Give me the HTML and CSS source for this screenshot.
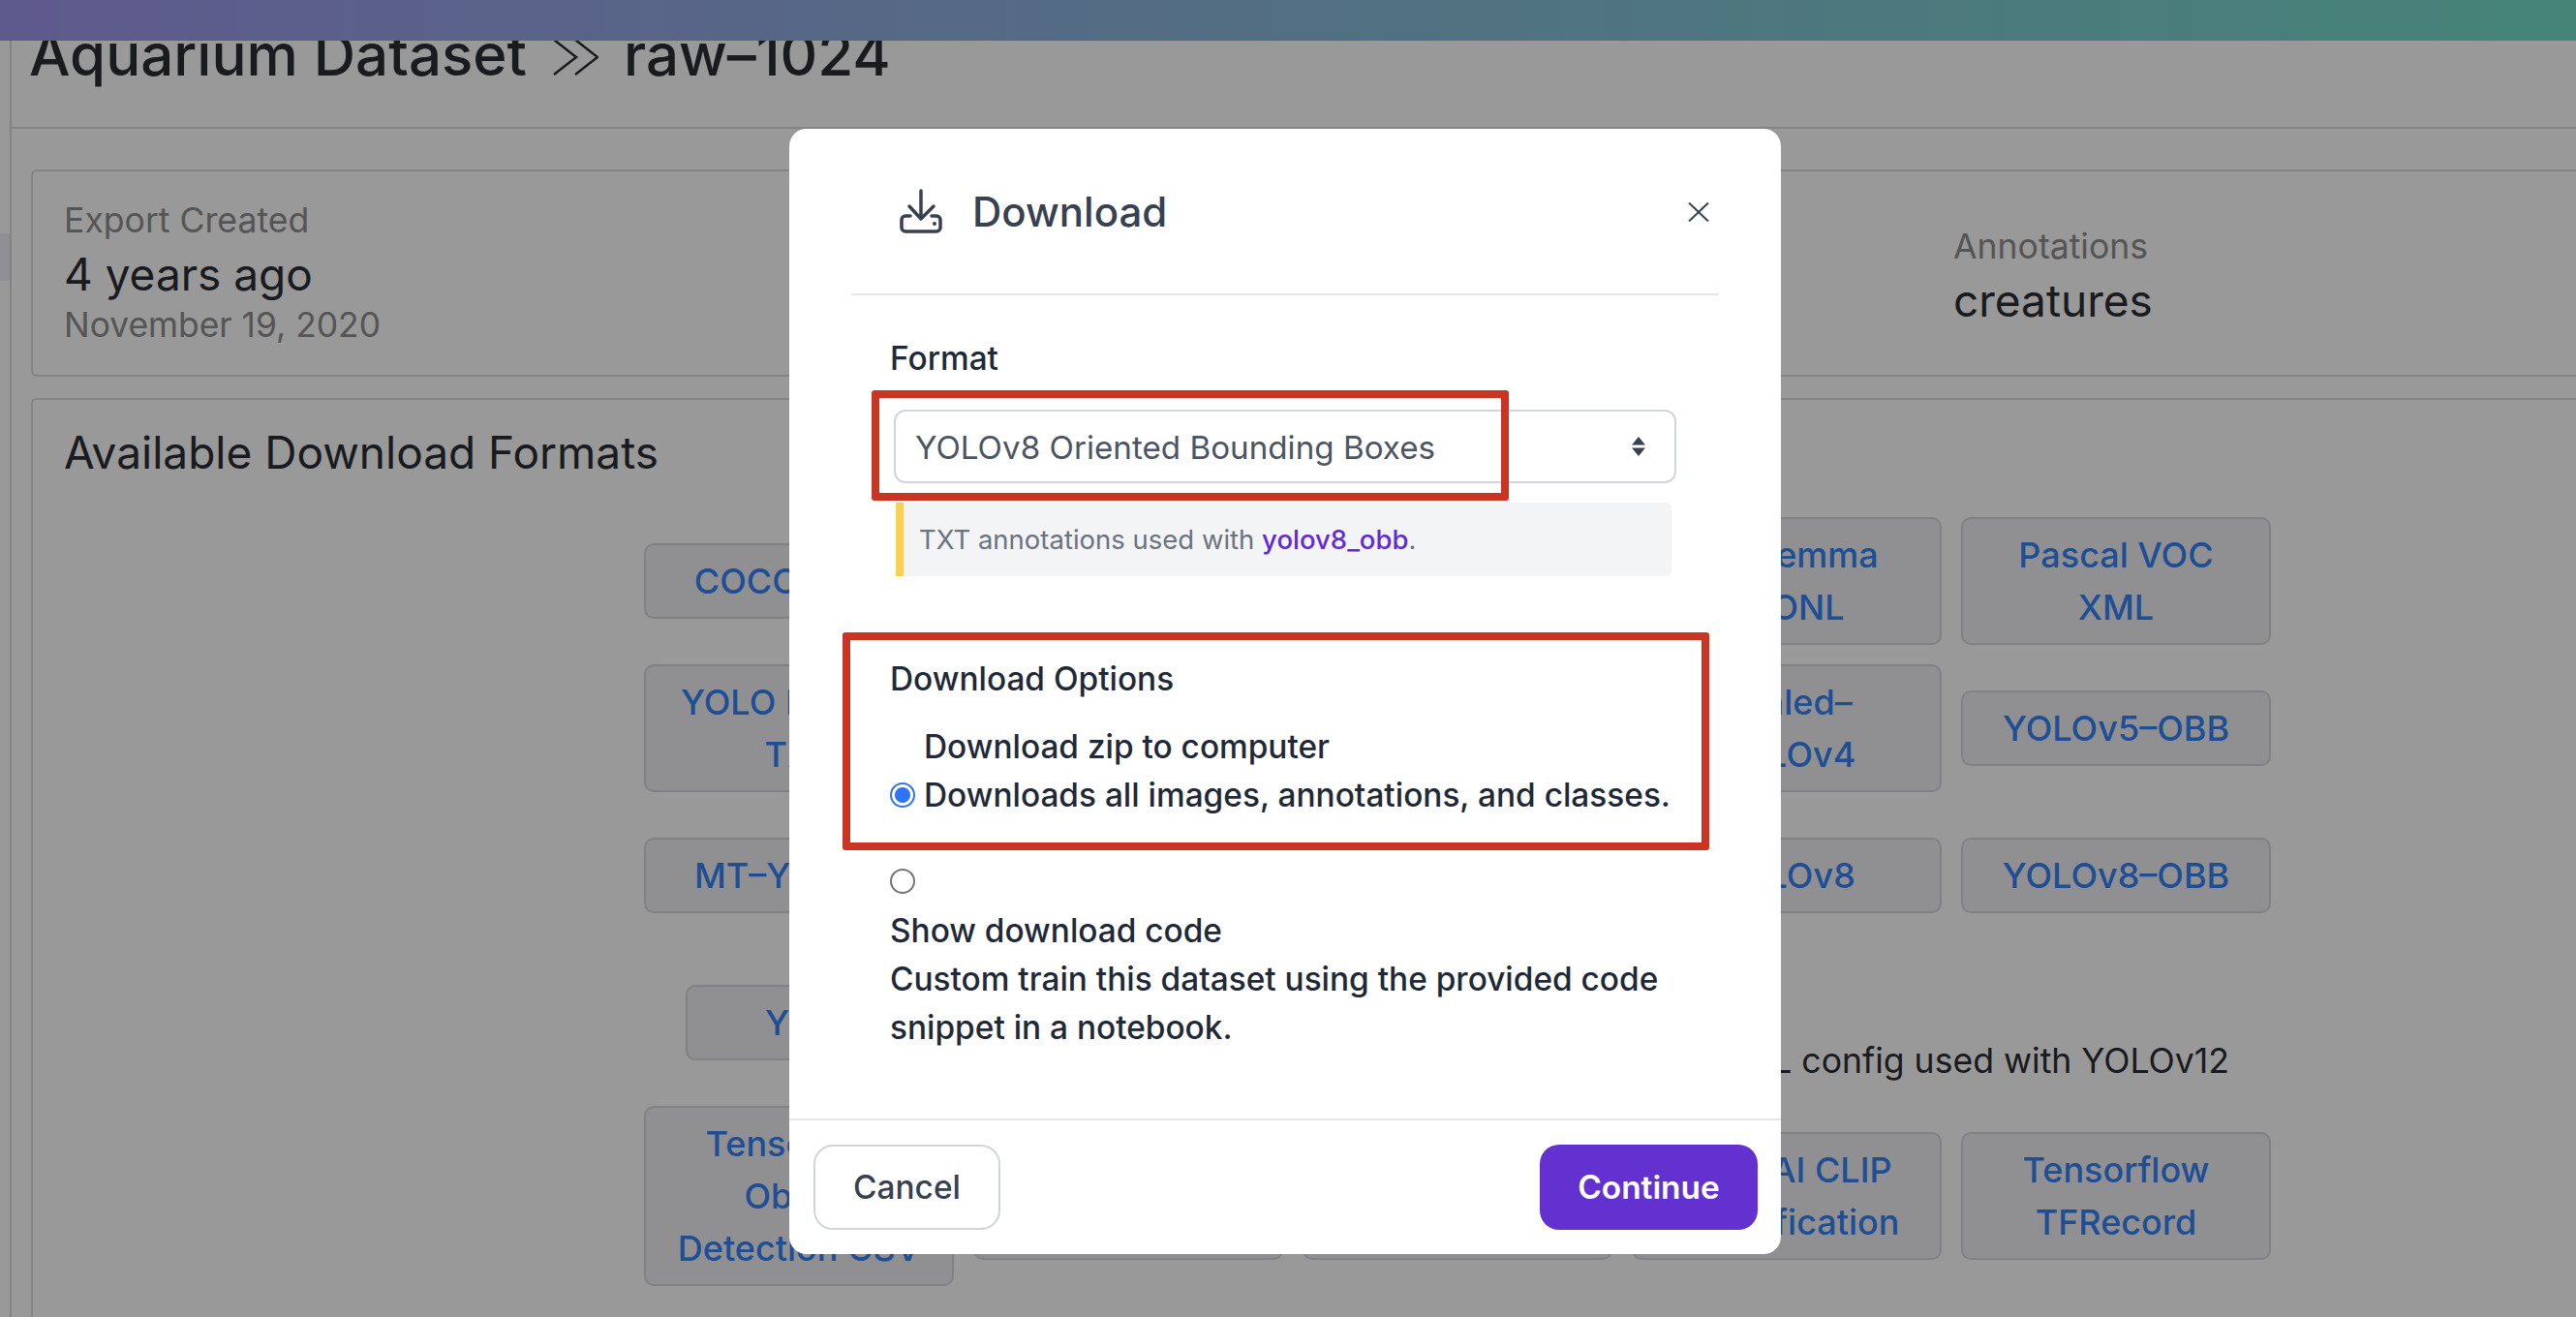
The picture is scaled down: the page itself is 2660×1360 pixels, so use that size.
FILE: index.html
```html
<!DOCTYPE html>
<html lang="en">
<head>
<meta charset="utf-8">
<title>Aquarium Dataset raw-1024 Download</title>
<link rel="stylesheet" href="styles.css">
</head>
<body>
<div class="page">
  <div class="topbar"></div>
  <aside class="rail"><div class="rail-active"></div></aside>
  <main class="main">
    <header class="page-head">
      <h1 class="crumbs">
        <span>Aquarium Dataset</span>
        <svg class="crumb-sep" viewBox="0 0 48 38" aria-hidden="true"><path d="M2 1 L25 19 L2 37 M24 1 L47 19 L24 37"/></svg>
        <span>raw–1024</span>
      </h1>
    </header>
    <section class="card stats">
      <div class="stat">
        <div class="stat-label">Export Created</div>
        <div class="stat-value">4 years ago</div>
        <div class="stat-note">November 19, 2020</div>
      </div>
      <div class="stat stat-side">
        <div class="stat-label">Annotations</div>
        <div class="stat-value">creatures</div>
      </div>
    </section>
    <section class="card formats">
      <h2 class="formats-title">Available Download Formats</h2>
      <div class="format-grid">
        <a class="fmt">COCO JSON</a>
        <a class="fmt fmt-blank"></a>
        <a class="fmt fmt-blank"></a>
        <a class="fmt">Paligemma JSONL</a>
        <a class="fmt">Pascal VOC XML</a>
        <a class="fmt">YOLO Darknet TXT</a>
        <a class="fmt fmt-blank"></a>
        <a class="fmt fmt-blank"></a>
        <a class="fmt">Scaled–<br>YOLOv4</a>
        <a class="fmt">YOLOv5–OBB</a>
        <a class="fmt">MT–YOLOv6</a>
        <a class="fmt fmt-blank fmt-tall"></a>
        <a class="fmt fmt-blank"></a>
        <a class="fmt">YOLOv8</a>
        <a class="fmt">YOLOv8–OBB</a>
        <div class="format-row">
          <a class="fmt">YOLOv12</a>
          <p class="format-hint">YAML config used with YOLOv12</p>
        </div>
        <a class="fmt">Tensorflow Object Detection CSV</a>
        <a class="fmt fmt-blank fmt-tall"></a>
        <a class="fmt fmt-blank fmt-tall"></a>
        <a class="fmt">OpenAI CLIP Classification</a>
        <a class="fmt">Tensorflow TFRecord</a>
      </div>
    </section>
  </main>

  <div class="overlay">
    <div class="modal">
      <div class="modal-head">
        <svg class="dl-icon" viewBox="0 0 44 46" aria-hidden="true">
          <path d="M22 2 V31 M10 18 L22 31 L35 18"/>
          <path d="M11 28 H6 a4 4 0 0 0 -4 4 v8 a4 4 0 0 0 4 4 H38 a4 4 0 0 0 4 -4 v-8 a4 4 0 0 0 -4 -4 H33"/>
          <circle class="dl-dot" cx="36" cy="36" r="2"/>
        </svg>
        <h3 class="modal-title">Download</h3>
        <svg class="close-icon" viewBox="0 0 22 20" aria-hidden="true"><path d="M1 0.5 L21 19.5 M21 0.5 L1 19.5"/></svg>
      </div>
      <div class="modal-body">
        <div class="field-label">Format</div>
        <div class="select">
          <span>YOLOv8 Oriented Bounding Boxes</span>
          <svg class="select-arrows" viewBox="0 0 16 20" aria-hidden="true"><path d="M8 0 L15 8.5 H1 Z M8 20 L1 11.5 H15 Z"/></svg>
        </div>
        <div class="note">TXT annotations used with&nbsp;<a class="note-link">yolov8_obb</a>.</div>
        <div class="field-label options-label">Download Options</div>
        <label class="option-inline">
          <input class="radio" type="radio" name="opt" checked>
          <span>Download zip to computer<br>Downloads all images, annotations, and classes.</span>
        </label>
        <label class="option-stacked">
          <input class="radio" type="radio" name="opt">
          <span>Show download code<br>Custom train this dataset using the provided code snippet in a notebook.</span>
        </label>
      </div>
      <div class="modal-foot">
        <button class="btn btn-cancel">Cancel</button>
        <button class="btn btn-continue">Continue</button>
      </div>
      <div class="mark mark-format"></div>
      <div class="mark mark-options"></div>
    </div>
  </div>
</div>
</body>
</html>
```
FILE: styles.css
```css
* { box-sizing: border-box; }
html, body { margin: 0; padding: 0; height: 100%; overflow: hidden; background: #fff; }
body { font-family: Inter, "Liberation Sans", sans-serif; color: #2b2d34; }

.page { position: relative; display: flex; width: 2660px; height: 1360px; overflow: hidden; }

.topbar {
  position: absolute; left: 0; top: 0; right: 0; height: 42px; z-index: 2;
  background: linear-gradient(90deg, #9e96ed, #75dcc8);
}

.rail { flex: 0 0 12px; border-right: 2px solid #d9d9d9; padding-top: 241px; }
.rail-active { height: 49px; background: #eeeef8; }

.main { flex: 1 1 auto; min-width: 0; padding-left: 20px; }

.page-head { height: 133px; margin-left: -20px; padding: 20px 0 0 18px; border-bottom: 2px solid #dcdcdc; }
.crumbs { display: flex; align-items: center; gap: 26px; margin: 0; font-size: 60px; line-height: 72px; font-weight: 500; color: #2b2d34; }
.crumb-sep { width: 48px; height: 38px; flex: none; margin-top: 6px; }
.crumb-sep path { fill: none; stroke: #2b2d34; stroke-width: 2.5; }

.card { border: 2px solid #dcdcdc; border-radius: 6px; margin-right: -40px; }

.stats { display: grid; grid-template-columns: 1951px auto; align-items: center; justify-content: start; margin-top: 42px; padding: 24px 32px 26px; }
.stat-side { padding-top: 4px; }
.stat-label { font-size: 35.6px; line-height: 54px; color: #8e8e8e; }
.stat-value { font-size: 46px; line-height: 56px; color: #2b2d34; }
.stat-note { font-size: 35.4px; line-height: 50px; color: #8e8e8e; }

.formats { margin-top: 22px; padding: 26px 32px 0; height: 1100px; }
.formats-title { margin: 0; font-size: 46px; line-height: 56px; font-weight: 400; color: #2b2d34; }

.format-grid {
  display: grid; grid-template-columns: repeat(5, 320px); gap: 20px; align-items: center;
  margin: 39px 0 0 599px; width: 1680px;
}
.fmt {
  display: flex; align-items: center; justify-content: center; text-align: center;
  width: 320px; padding: 10px 24px; border: 2px solid #d4d7dd; border-radius: 10px;
  background: #f0f1f6; color: #3482f6; font-size: 36px; line-height: 54px; font-weight: 500;
}
.fmt-blank { height: 76px; }
.fmt-tall { height: 132px; }
.format-row { grid-column: 1 / -1; display: flex; justify-content: space-between; align-items: flex-start; width: 1594px; height: 105px; margin: 27px 0 0 43px; }
.format-hint { margin: 52px 0 0; font-size: 35.6px; line-height: 54px; color: #2b2d34; }

.overlay { position: absolute; inset: 0; z-index: 5; background: rgba(0, 0, 0, .4); padding: 133px 0 0 815px; }
.modal { position: relative; display: flex; flex-direction: column; width: 1024px; height: 1162px; background: #fff; border-radius: 18px; overflow: hidden; }

.modal-head { display: flex; align-items: center; height: 172px; margin: 0 64px; padding: 2px 10px 0 50px; border-bottom: 2px solid #e5e7eb; }
.dl-icon { flex: none; width: 44px; height: 46px; margin-top: -2px; }
.dl-icon path { fill: none; stroke: #374151; stroke-width: 3.5; stroke-linecap: round; stroke-linejoin: round; }
.dl-dot { fill: #374151; }
.modal-title { margin: 0 0 0 31px; flex: 1; font-size: 42px; line-height: 56px; font-weight: 500; color: #374151; }
.close-icon { flex: none; width: 22px; height: 20px; }
.close-icon path { fill: none; stroke: #374151; stroke-width: 2; }

.modal-body { flex: 1 1 auto; padding: 40px 0 0 104px; }
.field-label { font-size: 33.4px; line-height: 50px; font-weight: 500; color: #1f2937; }
.select { display: flex; align-items: center; justify-content: space-between; width: 808px; height: 76px; margin: 28px 0 0 4px; padding: 2px 29px 0 20px; border: 2px solid #d1d5db; border-radius: 12px; font-size: 33.2px; color: #4b5563; }
.select-arrows { width: 16px; height: 20px; fill: #374151; margin-top: -2px; }
.note { display: flex; align-items: center; width: 801px; height: 76px; margin: 20px 0 0 6px; padding-left: 16px; border-left: 8px solid #fbd14b; border-radius: 0 6px 6px 0; background: #f3f4f6; font-size: 27.5px; color: #6b7280; }
.note-link { color: #6229d6; font-weight: 500; }
.options-label { margin-top: 81px; }

.option-inline { display: flex; align-items: flex-end; gap: 9px; margin: 20px 0 0 0; font-size: 33.4px; line-height: 50px; font-weight: 500; color: #1f2937; }
.option-stacked { display: block; width: 810px; margin-top: 51px; font-size: 33.4px; line-height: 50px; font-weight: 500; color: #1f2937; }
.option-stacked span { display: block; margin-top: 13px; }
.option-stacked .radio { display: block; }
.option-inline .radio { margin-bottom: 12px; }

.radio { appearance: none; flex: none; width: 26px; height: 26px; margin: 0; border: 2px solid #767676; border-radius: 50%; background: #fff; }
.radio:checked { border: 2.5px solid #2f74f6; background: radial-gradient(circle, #2f74f6 0 7.5px, #fff 8.5px); }

.modal-foot { display: flex; justify-content: space-between; height: 140px; padding: 25px 24px 0 25px; border-top: 2px solid #e5e7eb; }
.btn { height: 88px; border-radius: 20px; font-family: inherit; font-size: 33.4px; font-weight: 500; }
.btn-cancel { width: 193px; background: #fff; border: 2px solid #d1d5db; color: #374151; }
.btn-continue { width: 225px; background: #6331d0; border: 0; color: #fff; font-weight: 600; }

.mark { position: absolute; border: 8px solid #c93423; border-radius: 3px; pointer-events: none; }
.mark-format { left: 85px; top: 270px; width: 658px; height: 114px; }
.mark-options { left: 55px; top: 520px; width: 895px; height: 225px; }
```
